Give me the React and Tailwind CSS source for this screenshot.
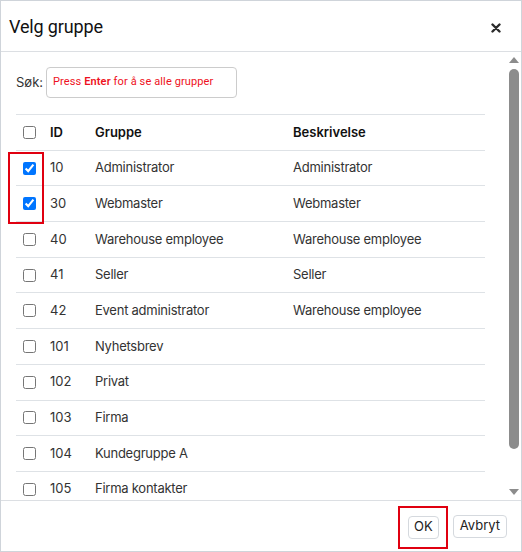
import React from 'react'

const groups = [
  { id: 10, name: 'Administrator', desc: 'Administrator', checked: true },
  { id: 30, name: 'Webmaster', desc: 'Webmaster', checked: true },
  { id: 40, name: 'Warehouse employee', desc: 'Warehouse employee' },
  { id: 41, name: 'Seller', desc: 'Seller' },
  { id: 42, name: 'Event administrator', desc: 'Warehouse employee' },
  { id: 101, name: 'Nyhetsbrev', desc: '' },
  { id: 102, name: 'Privat', desc: '' },
  { id: 103, name: 'Firma', desc: '' },
  { id: 104, name: 'Kundegruppe A', desc: '' },
  { id: 105, name: 'Firma kontakter', desc: '' },
]

function Row({ children, head }) {
  return (
    <div
      className={`flex items-center h-[35.7px] border-t border-[#dee2e6] text-[13px] ${
        head ? 'font-semibold text-[#111]' : 'text-[#333]'
      }`}
    >
      {children}
    </div>
  )
}

function Scrollbar() {
  return (
    <div className="w-[15px] shrink-0 flex flex-col items-center pt-[5px] pb-[5px]">
      <div className="w-0 h-0 border-l-[5px] border-r-[5px] border-b-[6px] border-l-transparent border-r-transparent border-b-[#8c8c8c]" />
      <div className="w-[10px] flex-1 mt-[6px] mb-[40px] rounded-full bg-[#8c8c8c]" />
      <div className="w-0 h-0 border-l-[5px] border-r-[5px] border-t-[6px] border-l-transparent border-r-transparent border-t-[#8c8c8c]" />
    </div>
  )
}

export default function App() {
  return (
    <div className="w-[522px] h-[552px] border border-[#cfd4da] bg-white flex flex-col font-['Inter',sans-serif] text-[#333]">
      {/* header */}
      <div className="h-[51px] shrink-0 border-b border-[#dcdfe3] flex items-center justify-between pl-[8px] pr-[20px]">
        <h2 className="text-[18px] text-[#111] font-normal font-['Roboto',sans-serif] tracking-[-0.15px]">Velg gruppe</h2>
        <svg width="10" height="10" viewBox="0 0 10 10" className="mt-[3px]">
          <path d="M1.5 1.5 L8.5 8.5 M8.5 1.5 L1.5 8.5" stroke="#2b2b2b" strokeWidth="2.4" strokeLinecap="round" />
        </svg>
      </div>

      {/* body */}
      <div className="flex-1 flex min-h-0 overflow-hidden">
        <div className="flex-1 relative pl-[15px] pr-[21px] pt-[15px] overflow-hidden">
          <div className="flex items-center h-[31px]">
            <label className="text-[13px] text-[#333] mr-[3px]">Søk:</label>
            <div className="w-[191px] h-[31px] border border-[#ccc] rounded-[4px] pl-[6px] flex items-start pt-[6px] text-[11px] text-[#ee1122] font-['Roboto',sans-serif] tracking-[0.12px]">
              <span>
                Press <b className="font-semibold">Enter</b> for å se alle grupper
              </span>
            </div>
          </div>

          <div className="mt-[16px]">
            <Row head>
              <span className="w-[34px] pl-[7px] flex">
                <input type="checkbox" className="w-[13px] h-[13px] m-0" />
              </span>
              <span className="w-[45px]">ID</span>
              <span className="w-[198px]">Gruppe</span>
              <span>Beskrivelse</span>
            </Row>
            {groups.map((g) => (
              <Row key={g.id}>
                <span className="w-[34px] pl-[7px] flex">
                  <input type="checkbox" defaultChecked={g.checked} className="w-[13px] h-[13px] m-0" />
                </span>
                <span className="w-[45px]">{g.id}</span>
                <span className="w-[198px] tracking-[-0.25px]">{g.name}</span>
                <span className="tracking-[-0.25px]">{g.desc}</span>
              </Row>
            ))}
          </div>

          {/* highlight around the checked rows */}
          <div className="absolute left-[7px] top-[100px] w-[36px] h-[72px] border-2 border-[#e00010]" />
        </div>
        <Scrollbar />
      </div>

      {/* footer */}
      <div className="h-[51px] shrink-0 border-t border-[#dcdfe3] flex items-center justify-end pr-[14px] gap-[14px]">
        <div className="relative">
          <button className="h-[23px] px-[5px] border border-[#d5d9de] rounded-[4px] bg-white text-[13px] text-[#222]">OK</button>
          <div className="absolute -left-[10px] -top-[7px] -right-[9px] -bottom-[10px] border-2 border-[#e00010]" />
        </div>
        <button className="h-[23px] px-[6px] border border-[#d5d9de] rounded-[4px] bg-white text-[13px] text-[#222]">Avbryt</button>
      </div>
    </div>
  )
}
